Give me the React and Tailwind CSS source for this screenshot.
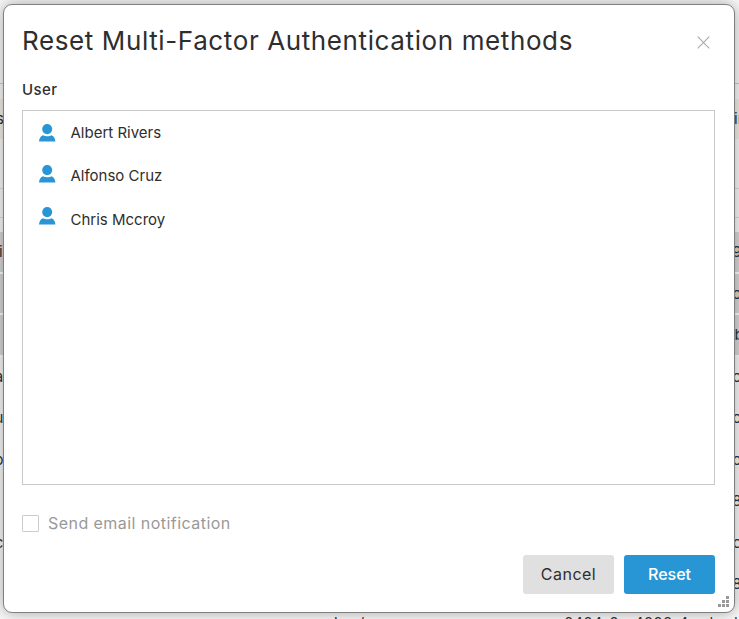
const users = ['Albert Rivers', 'Alfonso Cruz', 'Chris Mccroy']

const rows = [
  { left: 'i', right: '9', selected: true },
  { left: '', right: 'o', selected: true },
  { left: '', right: 'b', selected: true },
  { left: 'a', right: 'o' },
  { left: 'u', right: 'o' },
  { left: 'o', right: 'o' },
  { left: '', right: '8' },
  { left: 'c', right: 'c' },
  { left: '', right: '8' },
]

function UserIcon() {
  return (
    <svg className="block" width="17" height="18" viewBox="0 0 17 18" fill="#2896d5">
      <ellipse cx="8.2" cy="5.1" rx="5" ry="5.1" />
      <path d="M0 17.5 C0.3 14.8 1.2 12.2 3.9 11.2 C6.2 12.6 10.2 12.6 12.5 11.2 C15.2 12.2 16.1 14.8 16.4 17.5 Z" />
    </svg>
  )
}

function Backdrop() {
  return (
    <div className="flex h-full flex-col text-[15px] leading-[39px] text-[#333]">
      <div className="h-[84px] shrink-0 border-b border-[#ccc]" />
      <div className="mt-[15px] flex h-10 shrink-0 justify-between bg-[#f3efe8]">
        <span className="-ml-1">s</span>
        <span className="w-[5px]">in</span>
      </div>
      <div className="h-[50px] shrink-0 border-b border-[#ddd]" />
      <div className="mb-[14px] h-[29px] shrink-0 border-b border-[#ddd]" />
      {rows.map((row, i) => (
        <div key={i} className={`flex h-[41.5px] shrink-0 justify-between border-b-[2.5px] ${row.selected ? 'border-white bg-[#d9d9d9]' : 'border-transparent'}`}>
          <span className={row.left === 'i' ? '-ml-px' : '-ml-[7px] w-3 text-center'}>{row.left}</span>
          <span className={row.right === 'b' ? '-mr-1.5 w-3 text-center' : '-mr-1 w-3 text-center'}>{row.right}</span>
        </div>
      ))}
      <div className="flex h-5 shrink-0 gap-[193px] pl-[334px] pt-[10px] leading-[14px]">
        <span>l &nbsp; &nbsp; /</span>
        <span className="whitespace-nowrap">-0404-0 - 4006-4 - d - d</span>
      </div>
    </div>
  )
}

export default function App() {
  return (
    <div className="relative h-[619px] w-[739px] overflow-hidden bg-[#fafafa] font-['Inter',sans-serif] text-[#2e2e2e]">
      <Backdrop />
      <div
        role="dialog"
        className="absolute left-[3px] top-1 flex h-[609px] w-[732px] flex-col rounded-[9px] border border-[#808080] bg-white pl-[18px] pr-[19px] shadow-[0_0_16px_rgba(0,0,0,0.35)]"
      >
        <div className="flex h-[73px] shrink-0 items-center justify-between pr-[5px]">
          <h1 className="-mt-0.5 whitespace-nowrap text-[26px] tracking-[0.61px]">Reset Multi-Factor Authentication methods</h1>
          <svg className="mt-0.5" width="13" height="13" viewBox="0 0 13 13" stroke="#aaa" strokeWidth="1.1">
            <path d="M0.7 0.7 L12.3 12.3 M12.3 0.7 L0.7 12.3" />
          </svg>
        </div>
        <div className="h-8 shrink-0 pt-px text-[15px] font-medium leading-[22px] tracking-[0.4px]">User</div>
        <div className="flex h-[375px] shrink-0 gap-[15px] border border-[#c8c8c8] pl-4 text-[15px]">
          <div className="flex flex-col gap-[23.5px] pt-[12.75px]">
            {users.map((name) => (
              <UserIcon key={name} />
            ))}
          </div>
          <ul className="-ml-[0.5px]">
            {users.map((name) => (
              <li key={name} className="h-[43.25px] leading-[43px]">{name}</li>
            ))}
          </ul>
        </div>
        <label className="mt-[26px] flex h-6 shrink-0 items-center gap-[9px] text-[16px] tracking-[0.45px] text-[#999]">
          <span className="size-[17px] rounded-[1px] border border-[#ccc]" />
          <span className="-mt-px">Send email notification</span>
        </label>
        <div className="mt-5 flex justify-end gap-2.5">
          <button className="h-[39px] w-[91px] rounded-[3px] bg-[#e0e0e0] pb-0.5 text-[16px] tracking-[0.5px]">Cancel</button>
          <button className="h-[39px] w-[91px] rounded-[3px] bg-[#2896d5] pb-0.5 text-[16px] font-medium text-white">Reset</button>
        </div>
        <svg className="absolute bottom-[5px] right-[5px]" width="11" height="11" fill="#999">
          <path d="M8 0h3v3H8zM4 4h3v3H4zM8 4h3v3H8zM0 8h3v3H0zM4 8h3v3H4zM8 8h3v3H8z" />
        </svg>
      </div>
    </div>
  )
}
